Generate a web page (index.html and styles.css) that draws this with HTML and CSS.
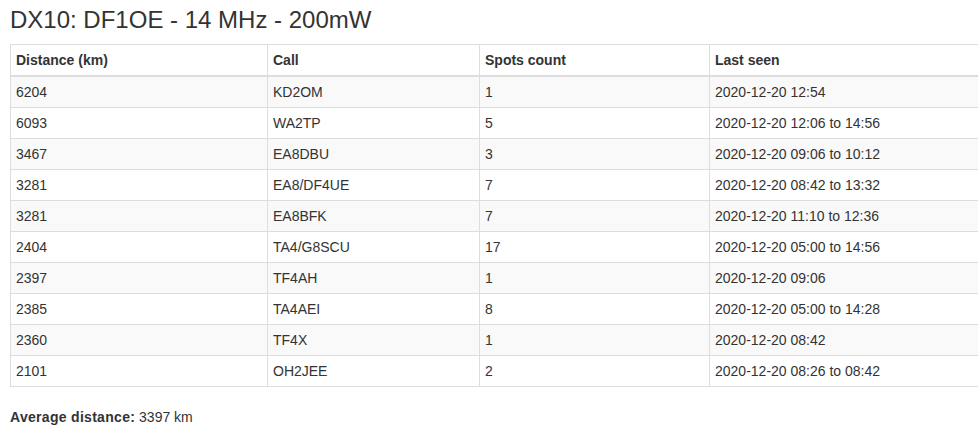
FILE: index.html
```html
<!DOCTYPE html>
<html>
<head>
<meta charset="utf-8">
<link rel="stylesheet" href="styles.css">
</head>
<body>
<div class="page">
<h3 class="title">DX10: DF1OE - 14 MHz - 200mW</h3>
<table class="spots">
<colgroup>
<col class="c-dist"><col class="c-call"><col class="c-count"><col class="c-last">
</colgroup>
<thead>
<tr><th>Distance (km)</th><th>Call</th><th>Spots count</th><th>Last seen</th></tr>
</thead>
<tbody>
<tr><td>6204</td><td>KD2OM</td><td>1</td><td>2020-12-20 12:54</td></tr>
<tr><td>6093</td><td>WA2TP</td><td>5</td><td>2020-12-20 12:06 to 14:56</td></tr>
<tr><td>3467</td><td>EA8DBU</td><td>3</td><td>2020-12-20 09:06 to 10:12</td></tr>
<tr><td>3281</td><td>EA8/DF4UE</td><td>7</td><td>2020-12-20 08:42 to 13:32</td></tr>
<tr><td>3281</td><td>EA8BFK</td><td>7</td><td>2020-12-20 11:10 to 12:36</td></tr>
<tr><td>2404</td><td>TA4/G8SCU</td><td>17</td><td>2020-12-20 05:00 to 14:56</td></tr>
<tr><td>2397</td><td>TF4AH</td><td>1</td><td>2020-12-20 09:06</td></tr>
<tr><td>2385</td><td>TA4AEI</td><td>8</td><td>2020-12-20 05:00 to 14:28</td></tr>
<tr><td>2360</td><td>TF4X</td><td>1</td><td>2020-12-20 08:42</td></tr>
<tr><td>2101</td><td>OH2JEE</td><td>2</td><td>2020-12-20 08:26 to 08:42</td></tr>
</tbody>
</table>
<p class="avg"><strong>Average distance:</strong> 3397 km</p>
</div>
</body>
</html>
```
FILE: styles.css
```css
html, body {
  margin: 0;
  padding: 0;
  background: #fff;
}
body {
  font-family: "Liberation Sans", Arial, Helvetica, sans-serif;
  font-size: 14px;
  line-height: 20px;
  color: #333;
}
.page {
  padding: 0 0 0 10px;
}
.title {
  font-size: 24px;
  font-weight: 500;
  line-height: 26px;
  margin: 7px 0 11px 0;
}
.spots {
  border-collapse: collapse;
  border-spacing: 0;
  width: 100%;
  border: 1px solid #ddd;
  border-right: none;
  margin-bottom: 20px;
  table-layout: fixed;
}
.c-dist { width: 257px; }
.c-call { width: 212px; }
.c-count { width: 230px; }
.spots th, .spots td {
  padding: 5px;
  border: 1px solid #ddd;
  text-align: left;
  vertical-align: top;
  line-height: 20px;
}
.spots th:last-child, .spots td:last-child {
  border-right: none;
}
.spots th {
  font-weight: bold;
  border-bottom: 2px solid #ddd;
}
.spots tbody tr:nth-child(odd) {
  background: #f9f9f9;
}
.avg {
  margin: 0;
}
.avg strong {
  letter-spacing: 0.3px;
}
```
